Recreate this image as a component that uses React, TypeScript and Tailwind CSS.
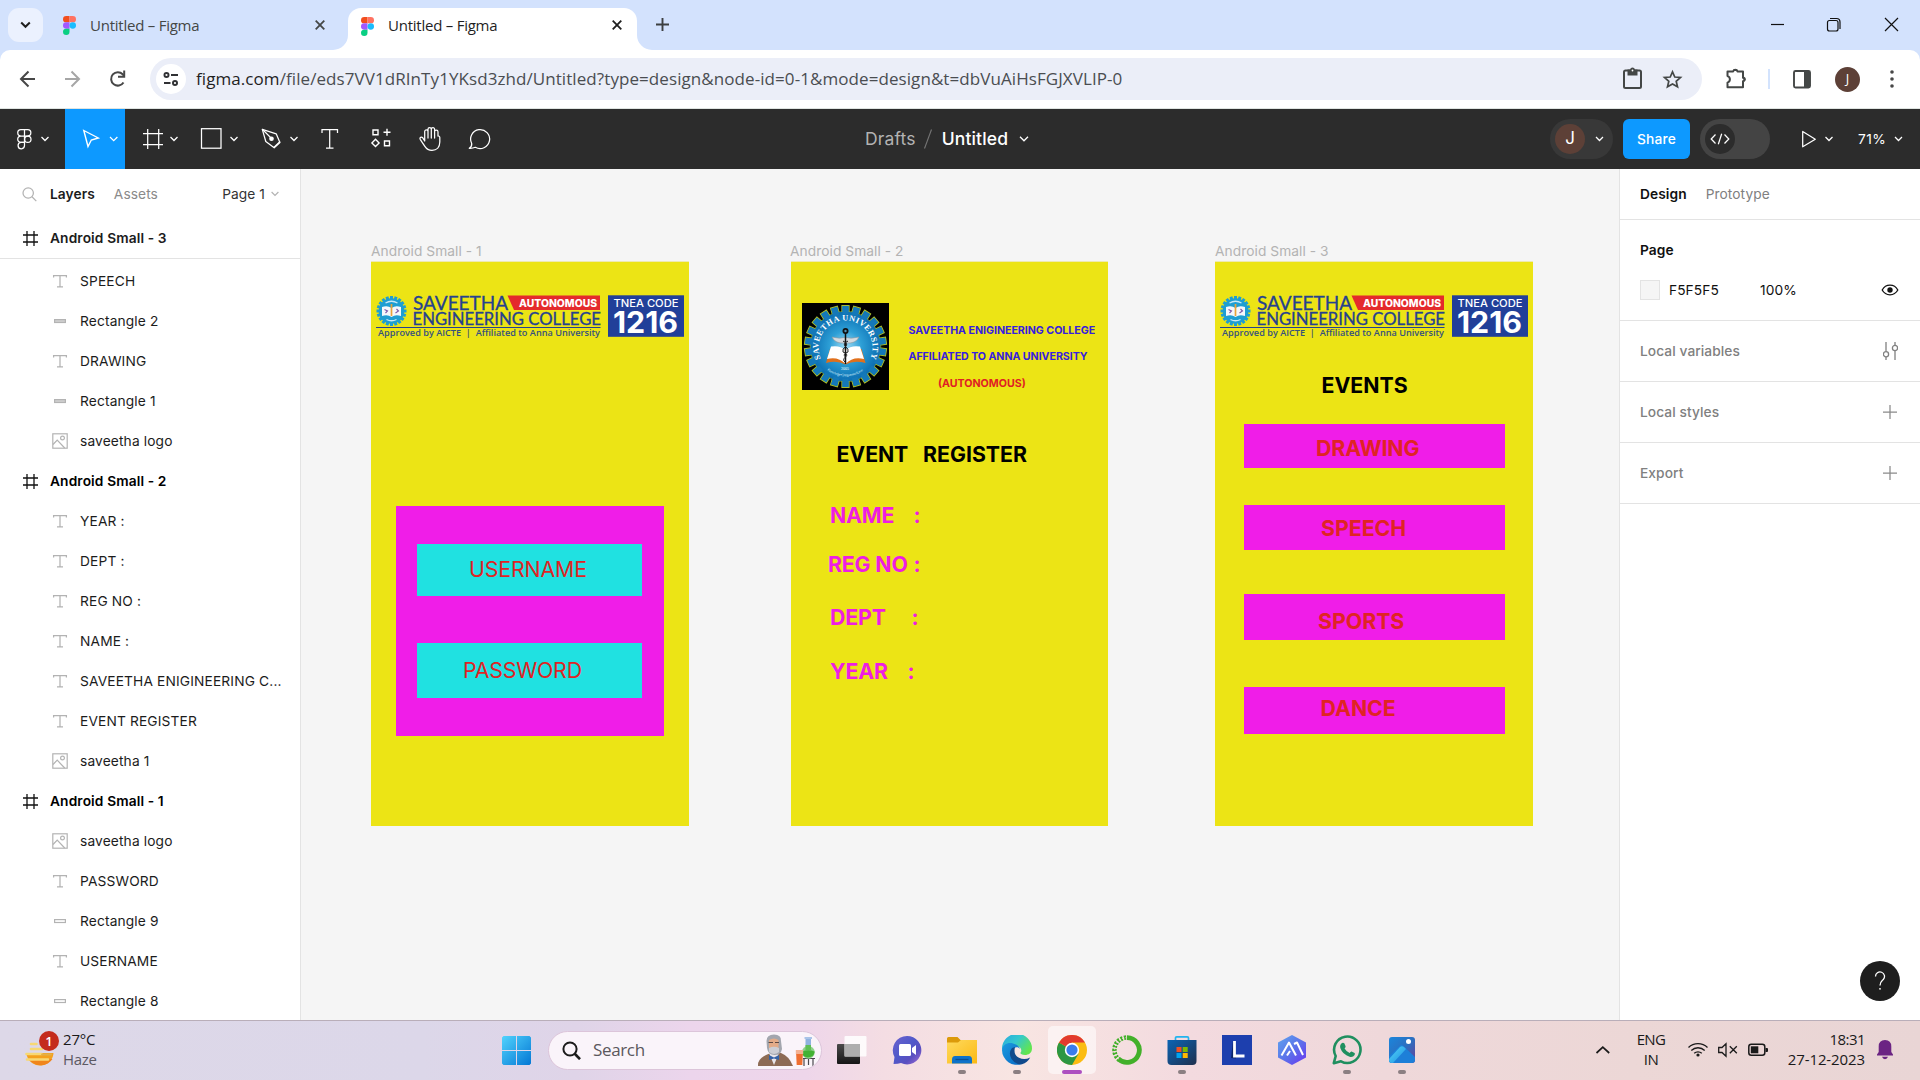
import type { ReactNode } from "react";

type LayerKind = "text" | "solid" | "rect" | "image" | "frame";

const layers: { kind: LayerKind; name: string }[] = [
  { kind: "text", name: "SPEECH" },
  { kind: "solid", name: "Rectangle 2" },
  { kind: "text", name: "DRAWING" },
  { kind: "solid", name: "Rectangle 1" },
  { kind: "image", name: "saveetha logo" },
  { kind: "frame", name: "Android Small - 2" },
  { kind: "text", name: "YEAR :" },
  { kind: "text", name: "DEPT :" },
  { kind: "text", name: "REG NO :" },
  { kind: "text", name: "NAME :" },
  { kind: "text", name: "SAVEETHA ENIGINEERING C..." },
  { kind: "text", name: "EVENT REGISTER" },
  { kind: "image", name: "saveetha 1" },
  { kind: "frame", name: "Android Small - 1" },
  { kind: "image", name: "saveetha logo" },
  { kind: "text", name: "PASSWORD" },
  { kind: "rect", name: "Rectangle 9" },
  { kind: "text", name: "USERNAME" },
  { kind: "rect", name: "Rectangle 8" },
];

/* ---------- Browser chrome ---------- */

function FigmaMark() {
  return (
    <svg className="h-[19px] w-[13px] shrink-0" viewBox="0 0 26 39" preserveAspectRatio="none">
      <path d="M6.500 0H13v13H6.500a6.500 6.500 0 0 1 0-13Z" fill="#f24e1e" />
      <path d="M13 0h6.500a6.500 6.500 0 0 1 0 13H13Z" fill="#ff7262" />
      <path d="M6.500 13H13v13H6.500a6.500 6.500 0 0 1 0-13Z" fill="#a259ff" />
      <circle cx="19.500" cy="19.500" r="6.500" fill="#1abcfe" />
      <path d="M6.500 26H13v6.500A6.500 6.500 0 1 1 6.500 26Z" fill="#0acf83" />
    </svg>
  );
}

function Cross({ color }: { color: string }) {
  return (
    <svg className="h-[10px] w-[10px] shrink-0" viewBox="0 0 10 10">
      <path d="M.7.7 9.300 9.300M9.300.7.7 9.300" stroke={color} strokeWidth="1.800" />
    </svg>
  );
}

function TabStrip() {
  return (
    <div className="flex h-[50px] items-end bg-[#d3e2fd]">
      <div className="mb-2 ml-2 flex h-[34px] w-[35px] items-center justify-center rounded-[11px] bg-[#ebf1fe]">
        <svg className="h-[8px] w-[11px]" viewBox="0 0 11 8">
          <path d="m1.200 1.500 4.300 4.300 4.300-4.300" fill="none" stroke="#1f1f1f" strokeWidth="2" />
        </svg>
      </div>
      <div className="mb-[5px] ml-5 flex h-10 w-[271px] items-center">
        <FigmaMark />
        <span className="ml-[14px] text-[15px] tracking-[-0.24px] text-[#444746]">Untitled – Figma</span>
        <span className="mr-[9px] ml-auto flex">
          <Cross color="#444746" />
        </span>
      </div>
      <svg className="-ml-[1px] h-[15px] w-[15px]" viewBox="0 0 15 15">
        <path d="M15 0v15H0A15 15 0 0 0 15 0Z" fill="#fff" />
      </svg>
      <div className="flex h-[42px] w-[289px] items-center rounded-t-[13px] bg-white pb-[8px]">
        <span className="ml-[13px] flex h-[26px] items-center">
          <span className="mt-[3px] flex">
            <FigmaMark />
          </span>
          <span className="mt-px ml-[14px] text-[15px] tracking-[-0.24px] text-[#1f1f1f]">Untitled – Figma</span>
        </span>
        <span className="mr-[15px] ml-auto flex">
          <Cross color="#1f1f1f" />
        </span>
      </div>
      <svg className="h-[15px] w-[15px]" viewBox="0 0 15 15">
        <path d="M0 0v15h15A15 15 0 0 1 0 0Z" fill="#fff" />
      </svg>
      <svg className="mb-[19px] ml-[4px] h-[13px] w-[13px]" viewBox="0 0 13 13">
        <path d="M6.500 0v13M0 6.500h13" stroke="#3c3f41" strokeWidth="1.900" />
      </svg>
      <svg className="ml-auto h-[50px] w-[200px]" viewBox="1720 0 200 50">
        <g fill="none" stroke="#111" strokeWidth="1.200">
          <path d="M1771 24.500h13" />
          <rect x="1827.500" y="20.500" width="10.500" height="10.500" rx="2" />
          <path d="M1830 18.500h6.500a3.500 3.500 0 0 1 3.500 3.500v7" />
          <path d="m1885 18 13 13M1898 18l-13 13" />
        </g>
      </svg>
    </div>
  );
}

function AddressBar() {
  return (
    <div className="bg-[#d3e2fd]">
      <div className="flex h-[58px] items-center rounded-t-[10px] bg-white">
        <svg className="h-[58px] w-[150px] shrink-0" viewBox="0 50 150 58">
          <g fill="none" strokeWidth="2">
            <path d="M35 79H21.500M28.500 71.500 21 79l7.500 7.500" stroke="#474747" />
            <path d="M65 79h13.500M71.500 71.500 79 79l-7.500 7.500" stroke="#a6a6a6" />
            <path d="M123.500 82.500a6.700 6.700 0 1 1-.8-8.200l1.300 1.500" stroke="#474747" />
            <path d="M124.200 70.500v6.200h-6.200" stroke="#474747" />
          </g>
        </svg>
        <div className="flex h-[42px] w-[1552px] items-center rounded-full bg-[#ebeef8] pl-[6px]">
          <div className="flex h-[30px] w-[30px] items-center justify-center rounded-full bg-white">
            <svg className="h-[14px] w-[16px]" viewBox="0 0 16 14" fill="none" stroke="#303134" strokeWidth="1.900">
              <circle cx="3.500" cy="3" r="2.050" />
              <path d="M8 3h7M1 11h6.500" />
              <circle cx="12" cy="11" r="2.050" />
            </svg>
          </div>
          <span className="ml-[10px] text-[17px] tracking-[0.075px] whitespace-pre text-[#4a4d51]">
            <span className="text-[#1f1f1f]">figma.com</span>
            /file/eds7VV1dRInTy1YKsd3zhd/Untitled?type=design&amp;node-id=0-1&amp;mode=design&amp;t=dbVuAiHsFGJXVLIP-0
          </span>
          <svg className="mr-[17px] ml-auto h-[24px] w-[66px]" viewBox="1619 67 66 24">
            <g fill="none" stroke="#444746" strokeWidth="2">
              <rect x="1624" y="70.500" width="17" height="17.500" rx="1.500" />
              <path
                d="m1672.500 71.800 2.300 5.200 5.700.5-4.300 3.800 1.300 5.500-5-2.900-5 2.900 1.300-5.500-4.300-3.800 5.700-.5Z"
                strokeWidth="1.700"
              />
            </g>
            <path d="M1627.500 69.500h2.500a2.600 2.600 0 0 1 5 0h2.500v6h-10Z" fill="#444746" />
            <circle cx="1632.500" cy="70.500" r=".9" fill="#fff" />
          </svg>
        </div>
        <svg className="h-[58px] w-[126px]" viewBox="1702 50 126 58">
          <path
            d="M1728.500 71.500h4.600a2.300 2.300 0 0 1 4.400 0h5.500v6.200a1.800 1.800 0 0 1 0 3.500v6h-15.500v-4.600a3.400 3.400 0 0 0 0-6.500v-4.600Z"
            fill="none"
            stroke="#444746"
            strokeWidth="2"
            strokeLinejoin="round"
          />
          <path d="M1733 71a2.600 2.600 0 0 1 5 0ZM1744 76.800a2.600 2.600 0 0 1 0 5Z" fill="#444746" />
          <rect x="1768" y="69" width="2" height="20" fill="#d3e3fd" />
          <rect x="1794" y="71" width="16" height="16.500" rx="1.500" fill="none" stroke="#444746" strokeWidth="1.900" />
          <path d="M1804 71h6v16.500h-6Z" fill="#444746" />
        </svg>
        <div className="ml-[7px] flex h-[25px] w-[25px] items-center justify-center rounded-full bg-[#5d4037] text-[13px] text-white">
          J
        </div>
        <svg className="ml-[30px] h-[20px] w-[4px]" viewBox="0 0 4 20" fill="#474747">
          <circle cx="2" cy="3" r="1.800" />
          <circle cx="2" cy="10" r="1.800" />
          <circle cx="2" cy="17" r="1.800" />
        </svg>
      </div>
      <div className="h-px bg-[#dfe4e1]" />
    </div>
  );
}

/* ---------- Figma toolbar ---------- */

function Cell({ width, box, blue, children }: { width: string; box: string; blue?: boolean; children: ReactNode }) {
  return (
    <svg
      className={`h-[60px] shrink-0 ${width} ${blue ? "bg-[#0d99ff]" : ""}`}
      viewBox={box}
      fill="none"
      stroke="#fff"
      strokeWidth="1.250"
    >
      {children}
    </svg>
  );
}

function Toolbar() {
  return (
    <div className="flex h-[60px] items-center bg-[#2c2c2c] font-['Inter',sans-serif] text-white">
      <Cell width="w-[65px]" box="0 109 65 60">
        <path d="M24.500 129.700h-3.600a3.100 3.100 0 0 0 0 6.300h3.600Zm0 0h3.200a3.100 3.100 0 0 1 0 6.300h-3.200M24.500 136h-3.600a3.200 3.200 0 0 0 0 6.400h3.600Z" />
        <circle cx="27.800" cy="139.200" r="3.200" />
        <path d="M24.500 142.400h-3.600a3.200 3.200 0 1 0 3.600 3.200Z" />
        <path d="m41.500 137 3.500 3.500 3.500-3.500" />
      </Cell>
      <Cell width="w-[60px]" box="65 109 60 60" blue>
        <path d="m83.800 130.500 14.500 7.500-7 2-3.300 6.500Z" strokeWidth="1.400" />
        <path d="m110 137 3.700 3.700 3.700-3.700" />
      </Cell>
      <Cell width="w-[60px]" box="125 109 60 60">
        <path d="M147.700 129v20M158.700 129v20M143 133.500h20M143 144.500h20" />
        <path d="m170.500 137 3.500 3.500 3.500-3.500" />
      </Cell>
      <Cell width="w-[60px]" box="185 109 60 60">
        <rect x="201.500" y="128.700" width="19.500" height="19.500" />
        <path d="m230.500 137 3.500 3.500 3.500-3.500" />
      </Cell>
      <Cell width="w-[60px]" box="245 109 60 60">
        <path d="m262.300 129.300 3.500 12.200 8.400 6.300 5.700-5.300-3.700-8.700Z" strokeLinejoin="round" />
        <path d="m262.300 129.300 8.500 8.500M273.800 147.500l6.300-6" />
        <circle cx="271.500" cy="138.700" r="1.700" fill="#fff" />
        <path d="m290.500 137 3.500 3.500 3.500-3.500" />
      </Cell>
      <Cell width="w-[50px]" box="305 109 50 60">
        <path d="M322 133v-3.500h15.500v3.500M329.700 129.500v18.500M326 148h7.500" />
      </Cell>
      <Cell width="w-[50px]" box="355 109 50 60">
        <path
          d="M373 130h5v4.800h-5ZM384.500 141h5v4.800h-5ZM387 128.800v7M383.500 132.300h7M375.500 139.200l3.600 3.700-3.600 3.600-3.600-3.600Z"
          strokeWidth="1.400"
        />
      </Cell>
      <Cell width="w-[50px]" box="405 109 50 60">
        <path
          d="M424.700 141v-9.500a1.650 1.650 0 0 1 3.300 0v6.500-8.700a1.650 1.650 0 0 1 3.300 0v8.700-8.700a1.650 1.650 0 0 1 3.300 0v8.700-6.300a1.650 1.650 0 0 1 3.400 0V136a1.600 1.600 0 0 1 1.800 1.600v4.500c0 5-3 8.300-7.800 8.300-3.700 0-5.700-1.800-7.300-4.300l-4.500-6.800c-1-1.700 1.200-3 2.500-1.600Z"
          strokeLinejoin="round"
        />
      </Cell>
      <Cell width="w-[50px]" box="455 109 50 60">
        <path
          d="M469.300 148.300c1.800-1.300 2.700-2.800 2.400-4.800a9.500 9.500 0 1 1 3.600 3.800c-1.800.8-3.900 1.100-6 1Z"
          strokeLinejoin="round"
        />
      </Cell>
      <div className="ml-[360px] flex items-center text-[17.5px] tracking-[0.15px]">
        <span className="text-[#b3b3b3]">Drafts</span>
        <svg className="ml-[8px] h-[20px] w-[8px]" viewBox="0 0 8 20">
          <path d="M.5 19.500 7.500.5" stroke="#757575" strokeWidth="1.100" />
        </svg>
        <span className="ml-[10px] font-medium">Untitled</span>
        <svg className="ml-[11px] h-[6px] w-[10px]" viewBox="0 0 10 6">
          <path d="m1 .8 4 4 4-4" fill="none" stroke="#fff" strokeWidth="1.300" />
        </svg>
      </div>
      <div className="ml-auto flex items-center text-[13.75px]">
        <div className="flex h-10 w-[63px] items-center rounded-full bg-[#383838] pl-[5px]">
          <span className="flex h-[30px] w-[30px] items-center justify-center rounded-full bg-[#5d4037] text-[17px]">
            J
          </span>
          <svg className="ml-[10px] h-[6px] w-[9px]" viewBox="0 0 9 6">
            <path d="m1 1 3.500 3.500L8 1" fill="none" stroke="#fff" strokeWidth="1.250" />
          </svg>
        </div>
        <div className="ml-[10px] flex h-10 w-[67px] items-center justify-center rounded-[6px] bg-[#0d99ff] font-medium tracking-[0.15px]">
          Share
        </div>
        <div className="ml-[10px] flex h-10 w-[70px] items-center rounded-full bg-[#444] pl-[5px]">
          <span className="flex h-[30px] w-[30px] items-center justify-center rounded-full bg-[#2c2c2c]">
            <svg className="h-[12px] w-[20px]" viewBox="0 0 20 12" fill="none" stroke="#fff" strokeWidth="1.250">
              <path d="M5.500 1.500 1.200 6l4.300 4.500M14.500 1.500 18.800 6l-4.300 4.500M11.700.8 8.300 11.200" />
            </svg>
          </span>
        </div>
        <svg
          className="ml-[31px] h-[18px] w-[34px]"
          viewBox="1801 130 34 18"
          fill="none"
          stroke="#fff"
          strokeWidth="1.250"
        >
          <path d="M1802.700 131.500v15.300l12.600-7.600Z" strokeLinejoin="round" />
          <path d="m1825.500 137 3.500 3.500 3.500-3.500" />
        </svg>
        <span className="ml-[23px] w-[30px] tracking-[0.4px]">71%</span>
        <svg className="mr-[17px] ml-[6px] h-[6px] w-[9px]" viewBox="0 0 9 6">
          <path d="m1 1 3.500 3.500L8 1" fill="none" stroke="#fff" strokeWidth="1.250" />
        </svg>
      </div>
    </div>
  );
}

/* ---------- Left panel ---------- */

function FrameIcon() {
  return (
    <svg className="h-[15px] w-[15px] shrink-0" viewBox="0 0 15 15" stroke="#111" strokeWidth="1.300">
      <path d="M4 0v15M11 0v15M0 4h15M0 11h15" />
    </svg>
  );
}

function LayerIcon({ kind }: { kind: LayerKind }) {
  if (kind === "text")
    return (
      <svg className="h-[16px] w-[16px]" viewBox="0 0 16 16" fill="none" stroke="#b3b3b3" strokeWidth="1.250">
        <path d="M1.600 4.500V2.600h12.800v1.900M8 2.600v11M5 13.800h6" />
      </svg>
    );
  if (kind === "image")
    return (
      <svg className="h-[16px] w-[16px]" viewBox="0 0 16 16" fill="none" stroke="#b3b3b3" strokeWidth="1.200">
        <rect x=".8" y=".8" width="14.400" height="14.400" />
        <circle cx="10.500" cy="5" r="1.900" />
        <path d="m1 11.500 4.200-4.300 7.500 7.800" />
      </svg>
    );
  return (
    <svg className="h-[16px] w-[16px]" viewBox="0 0 16 16">
      <rect
        x="2.600"
        y="6.600"
        width="10.800"
        height="2.900"
        fill={kind === "solid" ? "#cfcfcf" : "#fff"}
        stroke="#b3b3b3"
        strokeWidth="1.200"
      />
    </svg>
  );
}

function LayersPanel() {
  return (
    <div className="flex w-[301px] shrink-0 flex-col overflow-hidden border-r border-[#e3e3e3] bg-white text-[13.75px] tracking-[0.07px] text-[#1c1c1c]">
      <div className="flex h-[50px] shrink-0 items-center">
        <svg
          className="ml-[22px] h-[15px] w-[15px]"
          viewBox="0 0 15 15"
          fill="none"
          stroke="#b3b3b3"
          strokeWidth="1.250"
        >
          <circle cx="6.200" cy="6" r="5.200" />
          <path d="m10 9.800 4.300 4.300" />
        </svg>
        <span className="ml-[13px] font-semibold">Layers</span>
        <span className="ml-[19px] text-[#8a8a8a]">Assets</span>
        <span className="ml-auto text-[#333]">Page 1</span>
        <svg className="mr-[21px] ml-[6px] h-[6px] w-[8px]" viewBox="0 0 8 6">
          <path d="m.6 1 3.400 3.400L7.400 1" fill="none" stroke="#b3b3b3" strokeWidth="1.200" />
        </svg>
      </div>
      <div className="flex h-[40px] shrink-0 items-center border-b border-[#e3e3e3] pl-[23px]">
        <FrameIcon />
        <span className="ml-[12px] font-semibold tracking-[0.12px]">Android Small - 3</span>
      </div>
      <div className="flex flex-col pt-[2px]">
        {layers.map((l, i) =>
          l.kind === "frame" ? (
            <div key={i} className="flex h-10 shrink-0 items-center pl-[23px]">
              <FrameIcon />
              <span className="ml-[12px] font-semibold tracking-[0.12px] text-black">{l.name}</span>
            </div>
          ) : (
            <div key={i} className="flex h-10 shrink-0 items-center pl-[52px]">
              <LayerIcon kind={l.kind} />
              <span className="ml-[12px] tracking-[0.14px] whitespace-nowrap">{l.name}</span>
            </div>
          ),
        )}
      </div>
    </div>
  );
}

/* ---------- Canvas ---------- */

const smallTeeth = Array.from({ length: 20 }, (_, i) => i * 18);
const bigTeeth = Array.from({ length: 22 }, (_, i) => (i * 360) / 22);

function CollegeBanner() {
  return (
    <svg className="absolute top-[32px] left-[4px] h-[46px] w-[311px]" viewBox="375 294 311 46">
      <g transform="translate(391.500 311)">
        {smallTeeth.map((a) => (
          <rect key={a} x="-1.500" y="-15" width="3" height="4" fill="#1e9ed2" transform={`rotate(${a})`} />
        ))}
        <circle r="12.800" fill="#1e9ed2" />
        <path d="M-6-8Q0-11.500 6-8M-5 8.500Q0 11 5 8.500" fill="none" stroke="#c9e9f6" strokeWidth="1.300" />
        <path d="M-9.500-4Q-4-6 0-3 4-6 9.500-4V5Q4 3 0 6-4 3-9.500 5Z" fill="#f4f7fb" />
        <path d="M0-7v12" stroke="#e8a33a" strokeWidth="1.700" />
        <path d="M-7-1.500l3 1.500-2 2M5-2l2 2-3 2" stroke="#7a55a8" strokeWidth="1.100" fill="none" />
      </g>
      <g fill="#25418f" stroke="#25418f" strokeWidth=".3" fontFamily="Lato, sans-serif">
        <text x="413" y="309.800" fontSize="19.500" textLength="95" lengthAdjust="spacingAndGlyphs">
          SAVEETHA
        </text>
        <text x="412.500" y="324.800" fontSize="17.500" textLength="188.500" lengthAdjust="spacingAndGlyphs">
          ENGINEERING COLLEGE
        </text>
      </g>
      <path d="M507.500 295.500H600V310h-86Z" fill="#e42a2c" />
      <text
        x="519"
        y="306.500"
        fontFamily="Inter, sans-serif"
        fontSize="10.200"
        fontWeight="800"
        fill="#fff"
        textLength="78"
        lengthAdjust="spacingAndGlyphs"
      >
        AUTONOMOUS
      </text>
      <path d="M376 327.500h224.500" stroke="#25418f" strokeWidth="1" />
      <text
        x="378"
        y="336"
        fontFamily="'Open Sans', sans-serif"
        fontSize="8.800"
        fontWeight="600"
        fill="#35517e"
        textLength="222"
        lengthAdjust="spacingAndGlyphs"
        xmlSpace="preserve"
      >
        Approved by AICTE  |  Affiliated to Anna University
      </text>
      <rect x="608" y="295.300" width="76" height="41.500" fill="#213f99" />
      <text
        x="613.500"
        y="307"
        fontFamily="Inter, sans-serif"
        fontSize="10.500"
        fontWeight="500"
        fill="#fff"
        textLength="65"
        lengthAdjust="spacingAndGlyphs"
      >
        TNEA CODE
      </text>
      <text
        x="613"
        y="332.500"
        fontFamily="Inter, sans-serif"
        fontSize="30"
        fontWeight="700"
        fill="#fff"
        textLength="65"
        lengthAdjust="spacingAndGlyphs"
      >
        1216
      </text>
    </svg>
  );
}

function UniversityEmblem() {
  return (
    <svg className="absolute top-[41px] left-[11px] h-[87px] w-[87px]" viewBox="0 0 87 87">
      <defs>
        <radialGradient id="emblem">
          <stop offset="0" stopColor="#9fdcf5" />
          <stop offset=".45" stopColor="#2d9fd6" />
          <stop offset="1" stopColor="#0a6cb0" />
        </radialGradient>
        <path id="emblem-top" d="M19.300 56.500A27 27 0 1 1 67.700 56.500" />
        <path id="emblem-bottom" d="M24.500 66.500A30 30 0 0 0 62.500 66.500" />
      </defs>
      <rect width="87" height="87" fill="#000" />
      <g transform="translate(43.500 43.500)">
        {bigTeeth.map((a) => (
          <rect
            key={a}
            x="-3.600"
            y="-41"
            width="7.200"
            height="9"
            fill="#1478b8"
            stroke="#a9bd2b"
            strokeWidth="1"
            transform={`rotate(${a})`}
          />
        ))}
        <circle r="35.300" fill="url(#emblem)" stroke="#a9bd2b" strokeWidth=".5" />
        {bigTeeth.map((a) => (
          <rect key={a} x="-3.100" y="-40.300" width="6.200" height="8" fill="#1478b8" transform={`rotate(${a})`} />
        ))}
      </g>
      <text fontFamily="'Liberation Serif', serif" fontSize="8.300" fontWeight="700" fill="#fff">
        <textPath href="#emblem-top" textLength="107" startOffset="1">
          SAVEETHA UNIVERSITY
        </textPath>
      </text>
      <text fontFamily="'Liberation Serif', serif" fontSize="3.600" fill="#d8eef9">
        <textPath href="#emblem-bottom" textLength="38" startOffset="1">
          Knowledge•Competence•Love
        </textPath>
      </text>
      <text x="39" y="66.500" fontFamily="'Liberation Serif', serif" fontSize="4" fill="#fff">
        2005
      </text>
      <path d="M28 46 24 60q11-3 19.500 1.500Q52 57 63.500 60l-4-14Z" fill="#e0701c" />
      <path d="M29 43.500 25 56q11-3 18.500 5Q51 53 62 56l-4-12.500Q49 42 43.500 47 38 42 29 43.500Z" fill="#fff" />
      <path
        d="M30 34q7 2 13 .5Q50 36 57 34q-3 7-13.500 6Q33 41 30 34Z"
        fill="#d5dbe0"
        stroke="#8a959d"
        strokeWidth=".6"
      />
      <path d="M43.500 27v34" stroke="#111" strokeWidth="1.500" />
      <circle cx="43.500" cy="28" r="3" fill="#111" />
      <circle cx="43.500" cy="28" r="1.200" fill="#4f94b8" />
      <path d="M41 38q6 3 2.500 5.500T41 49q6 2 2.500 5T43 59" fill="none" stroke="#222" strokeWidth="1" />
      <path d="M46 38q-6 3-2.500 5.500T46 49q-6 2-2.500 5" fill="none" stroke="#222" strokeWidth="1" />
    </svg>
  );
}

function Label({ pos, children }: { pos: string; children: ReactNode }) {
  return <div className={`absolute leading-[26px] whitespace-pre ${pos}`}>{children}</div>;
}

function Canvas() {
  return (
    <div className="relative flex-1 overflow-hidden bg-[#f5f5f5]">
      <div className="absolute top-[73px] left-[70px] text-[13.75px] leading-[18px] tracking-[0.06px] text-[#b3b3b3]">
        Android Small - 1
      </div>
      <div className="absolute top-[73px] left-[489px] text-[13.75px] leading-[18px] tracking-[0.06px] text-[#b3b3b3]">
        Android Small - 2
      </div>
      <div className="absolute top-[73px] left-[914px] text-[13.75px] leading-[18px] tracking-[0.06px] text-[#b3b3b3]">
        Android Small - 3
      </div>

      <div className="absolute top-[92px] left-[70px] h-[565px] w-[318px] border-t border-[#eeeab0] bg-[#ece415]">
        <CollegeBanner />
        <div className="absolute top-[244px] left-[25px] h-[230px] w-[268px] bg-[#f01de8]" />
        <div className="absolute top-[282px] left-[46px] h-[52px] w-[225px] bg-[#20e1e1]" />
        <div className="absolute top-[381px] left-[46px] h-[55px] w-[225px] bg-[#20e1e1]" />
        <Label pos="top-[293.5px] left-[98px] text-[21.3px] tracking-[-0.12px] text-[#df2424]">USERNAME</Label>
        <Label pos="top-[394.5px] left-[92px] text-[21.3px] tracking-[-0.2px] text-[#df2424]">PASSWORD</Label>
      </div>

      <div className="absolute top-[92px] left-[490px] h-[565px] w-[317px] border-t border-[#eeeab0] bg-[#ece415]">
        <UniversityEmblem />
        <Label pos="top-[56px] left-[117.5px] text-[10.65px] font-bold tracking-[-0.03px] text-[#3620df]">
          SAVEETHA ENIGINEERING COLLEGE
        </Label>
        <Label pos="top-[82px] left-[117.5px] text-[10.65px] font-bold tracking-[-0.05px] text-[#3620df]">
          AFFILIATED TO ANNA UNIVERSITY
        </Label>
        <Label pos="top-[109px] left-[147px] text-[10.65px] font-bold text-[#df2024]">(AUTONOMOUS)</Label>
        <Label pos="top-[178.5px] left-[45.5px] text-[21.3px] font-bold tracking-[-0.1px] text-black">EVENT</Label>
        <Label pos="top-[178.5px] left-[132px] text-[21.3px] font-bold text-black">REGISTER</Label>
        <div className="text-[21.3px] font-bold tracking-[-0.15px] text-[#ee1ee2]">
          <Label pos="top-[240px] left-[39px]">NAME</Label>
          <Label pos="top-[240px] left-[122.5px]">:</Label>
          <Label pos="top-[288.5px] left-[37px]">REG NO</Label>
          <Label pos="top-[288.5px] left-[122.5px]">:</Label>
          <Label pos="top-[342px] left-[39px]">DEPT</Label>
          <Label pos="top-[342px] left-[120.5px]">:</Label>
          <Label pos="top-[396px] left-[39px]">YEAR</Label>
          <Label pos="top-[396px] left-[116.5px]">:</Label>
        </div>
      </div>

      <div className="absolute top-[92px] left-[914px] h-[565px] w-[318px] border-t border-[#eeeab0] bg-[#ece415]">
        <CollegeBanner />
        <Label pos="top-[110px] left-[106.5px] text-[21.3px] font-bold text-black">EVENTS</Label>
        <div className="absolute top-[162px] left-[29px] h-[44px] w-[261px] bg-[#f01de8]" />
        <div className="absolute top-[243px] left-[29px] h-[45px] w-[261px] bg-[#f01de8]" />
        <div className="absolute top-[332px] left-[29px] h-[46px] w-[261px] bg-[#f01de8]" />
        <div className="absolute top-[425px] left-[29px] h-[47px] w-[261px] bg-[#f01de8]" />
        <div className="text-[21.3px] font-bold text-[#df2424]">
          <Label pos="top-[172.5px] left-[101px] tracking-[-0.1px]">DRAWING</Label>
          <Label pos="top-[253px] left-[106px]">SPEECH</Label>
          <Label pos="top-[345.5px] left-[103px]">SPORTS</Label>
          <Label pos="top-[433px] left-[105.5px]">DANCE</Label>
        </div>
      </div>
    </div>
  );
}

/* ---------- Right panel ---------- */

function PlusIcon() {
  return (
    <svg className="h-[14px] w-[14px]" viewBox="0 0 14 14">
      <path d="M7 0v14M0 7h14" stroke="#8a8a8a" strokeWidth="1.250" />
    </svg>
  );
}

function SideRow({ label, children }: { label: string; children: ReactNode }) {
  return (
    <div className="flex h-[61px] items-center justify-between border-b border-[#e3e3e3] pr-[23px] pl-5 font-medium text-[#808080]">
      {label}
      {children}
    </div>
  );
}

function DesignPanel() {
  return (
    <div className="relative w-[301px] shrink-0 border-l border-[#e3e3e3] bg-white text-[13.75px] tracking-[0.07px] text-[#111]">
      <div className="flex h-[51px] items-center gap-[19px] border-b border-[#e3e3e3] pl-5">
        <span className="font-semibold">Design</span>
        <span className="text-[#808080]">Prototype</span>
      </div>
      <div className="h-[101px] border-b border-[#e3e3e3] pt-[10px] pr-[21px] pl-5">
        <div className="flex h-10 items-center font-semibold">Page</div>
        <div className="flex h-10 items-center">
          <div className="h-5 w-5 border border-[#e3e3e3] bg-[#f5f5f5]" />
          <span className="ml-[9px] w-[91px]">F5F5F5</span>
          <span>100%</span>
          <svg className="ml-auto h-[12px] w-[18px]" viewBox="0 0 18 12">
            <path
              d="M1.200 6C3 2.700 5.700 1.200 9 1.200S15 2.700 16.800 6C15 9.300 12.300 10.800 9 10.800S3 9.300 1.200 6Z"
              fill="none"
              stroke="#111"
              strokeWidth="1.300"
            />
            <circle cx="9" cy="6" r="2.700" fill="#111" />
          </svg>
        </div>
      </div>
      <SideRow label="Local variables">
        <svg className="-mr-[1px] h-[18px] w-[15px]" viewBox="0 0 15 18" fill="none" stroke="#808080" strokeWidth="1.300">
          <path d="M3 0v9.500M3 15v3M12 0v3.300M12 8.800V18" />
          <circle cx="3" cy="12.200" r="2.600" />
          <circle cx="12" cy="6" r="2.600" />
        </svg>
      </SideRow>
      <SideRow label="Local styles">
        <PlusIcon />
      </SideRow>
      <SideRow label="Export">
        <PlusIcon />
      </SideRow>
      <div className="absolute right-[20px] bottom-[19px] flex h-10 w-10 items-center justify-center rounded-full bg-[#1e1e1e]">
        <svg className="h-[20px] w-[12px]" viewBox="0 0 12 20">
          <path
            d="M1.500 5.500a4.500 4.500 0 1 1 7.800 3C7.500 10.300 6 11 6 14.500"
            fill="none"
            stroke="#fff"
            strokeWidth="1.300"
          />
          <circle cx="6" cy="17.800" r=".9" fill="#fff" />
        </svg>
      </div>
    </div>
  );
}

/* ---------- Taskbar ---------- */

function TaskIcon({ running, active, children }: { running?: boolean; active?: boolean; children: ReactNode }) {
  return (
    <div className="flex w-[55px] shrink-0 justify-center">
      <div className={`flex h-12 w-12 flex-col items-center pt-[9px] ${active ? "rounded-[5px] bg-white/55" : ""}`}>
        <svg className="h-[30px] w-[30px]" viewBox="0 0 30 30">
          {children}
        </svg>
        {running && <span className="mt-[5px] h-[4px] w-[8px] rounded-full bg-[#8b7f82]" />}
        {active && <span className="mt-[5px] h-[4px] w-[20px] rounded-full bg-[#ad4fc0]" />}
      </div>
    </div>
  );
}

function Taskbar() {
  return (
    <div className="flex h-[60px] shrink-0 items-center border-t border-[#b9aeb9] bg-[linear-gradient(90deg,#ddd8e8_0%,#dcd7e9_22%,#dfd4e8_30%,#ecd5ec_36%,#eed6ea_42%,#f4dde3_46%,#f8e5e2_53%,#f3dadf_62%,#efd8da_72%,#ecd7d6_85%,#e9d5d5_100%)] pb-px text-[15px] text-[#1a1a1a]">
      <svg className="mb-[3px] ml-[24px] h-[38px] w-[36px]" viewBox="24 1027 36 38">
        <path d="M26 1050h27.500a13.500 13 0 0 1-26.500 3Z" fill="#f4a11d" />
        <path d="M28.500 1056h24a13.500 12 0 0 1-23 1Z" fill="#f0851c" />
        <path d="M31 1041h5.500M31 1046h11M26.500 1051h15M27 1056.500h21" stroke="#f7d873" strokeWidth="2.600" strokeLinecap="round" />
        <path d="M42 1051.500h9" stroke="#e2b049" strokeWidth="2" strokeLinecap="round" />
        <circle cx="49" cy="1038" r="10" fill="#c42b1c" />
        <text
          x="49"
          y="1043"
          textAnchor="middle"
          fontFamily="'Open Sans', sans-serif"
          fontSize="13"
          fontWeight="600"
          fill="#fff"
        >
          1
        </text>
      </svg>
      <div className="mb-[3px] ml-[3px] w-[60px] leading-[20px]">
        <div className="tracking-[-0.2px]">27°C</div>
        <div className="tracking-[-0.3px] text-[#5c5963]">Haze</div>
      </div>
      <svg className="ml-[379px] h-[29px] w-[29px] shrink-0" viewBox="0 0 29 29">
        <defs>
          <linearGradient id="win" x1="0" y1="0" x2="1" y2="1">
            <stop offset="0" stopColor="#51d3fd" />
            <stop offset="1" stopColor="#0477d4" />
          </linearGradient>
        </defs>
        <path
          d="M1.500 0H14v14H0V1.500ZM15 0h12.500L29 1.500V14H15ZM0 15h14v14H1.500L0 27.500ZM15 15h14v12.500L27.500 29H15Z"
          fill="url(#win)"
        />
      </svg>
      <div className="ml-[17px] flex h-[39px] w-[274px] shrink-0 items-center overflow-hidden rounded-full border border-[#dcc5da] bg-[#faf4fa]">
        <svg className="ml-[13px] h-[19px] w-[19px]" viewBox="0 0 19 19" fill="none" stroke="#1c1c1c" strokeWidth="2">
          <circle cx="8" cy="8" r="6.600" />
          <path d="m12.500 12.500 5.500 5.700" strokeWidth="2.600" />
        </svg>
        <span className="ml-[12px] text-[17px] tracking-[-0.35px] text-[#5b585d]">Search</span>
        <svg className="mr-[5px] ml-auto h-[34px] w-[60px]" viewBox="757 1034 60 34">
          <path d="M759 1067q-.5-7 8-11l7-3 8 1q8 3 12 13Z" fill="#8d6b55" />
          <path d="M770 1054l5 12 5-12Z" fill="#e9e6ea" />
          <path d="M767.500 1042q0-6.500 7.500-6.500t7 6.500l1 8q-1 6-7.500 6t-7.500-7Z" fill="#a3a6ae" />
          <path d="M770 1041q5-3 9.500 0v9q-4.500 4-9.500 0Z" fill="#e3ab88" />
          <path d="M770 1049q5-2.500 10 0v4q-5 4-10 0Z" fill="#cdced4" />
          <path d="M769.500 1043.500h4.500M776 1043.500h4" stroke="#5d4a45" strokeWidth="1.100" />
          <path d="m770 1056 5 2.500 5-2.500v5l-5-1.500-5 1.500Z" fill="#3563a8" />
          <path d="M804 1059.500h12M805 1060v7M814 1060v7M809.500 1060v6" stroke="#4a474e" strokeWidth="1.200" fill="none" />
          <path d="M806.500 1039h5.500v9h-5.500Z" fill="#8fb2e0" />
          <path d="M805.500 1038h7.500v2h-7.500Z" fill="#a9c4e8" />
          <circle cx="809.300" cy="1053.300" r="6.400" fill="#8fd08a" />
          <path d="M803 1052.500q6.300-2.500 12.600 0a6.400 6.400 0 0 1-12.600 1Z" fill="#43b234" />
          <path d="M806.500 1046h5.500v5h-5.500Z" fill="#5fbf55" />
          <path d="M797 1052h7l-.7 14h-5.600Z" fill="#ef6f32" />
          <path d="M796.800 1051h7.400v4h-7.400Z" fill="#f3b193" />
        </svg>
      </div>
      <div className="ml-[2px] flex">
        <TaskIcon>
          <defs>
            <linearGradient id="tv" x1="0" y1="0" x2="0" y2="1">
              <stop offset="0" stopColor="#4a4a4a" />
              <stop offset="1" stopColor="#161616" />
            </linearGradient>
          </defs>
          <rect x="0" y="9" width="23" height="20" rx="1" fill="url(#tv)" />
          <rect x="7.500" y="1" width="22" height="20.500" rx="1" fill="#fff" fillOpacity=".85" />
          <rect x="7.500" y="9" width="15.500" height="12.500" fill="#aeaeae" />
        </TaskIcon>
        <TaskIcon>
          <defs>
            <linearGradient id="chat" x1="0" y1="0" x2="1" y2="1">
              <stop offset="0" stopColor="#6c62cf" />
              <stop offset=".45" stopColor="#5059c9" />
              <stop offset=".7" stopColor="#5a4fc0" />
              <stop offset="1" stopColor="#a26fd6" />
            </linearGradient>
          </defs>
          <path d="M15 1a14.200 14.200 0 1 1-6 27q-3 1-7.500 1L2.500 22A14.200 14.200 0 0 1 15 1Z" fill="url(#chat)" />
          <rect x="7" y="9" width="12" height="12" rx="1.500" fill="#fff" />
          <path d="m20 13 4-3v10l-4-3Z" fill="#fff" />
        </TaskIcon>
        <TaskIcon running>
          <defs>
            <linearGradient id="exp" x1="0" y1="0" x2="1" y2="1">
              <stop offset="0" stopColor="#ffda5e" />
              <stop offset="1" stopColor="#fbb913" />
            </linearGradient>
          </defs>
          <path d="M0 3.500Q0 2 1.500 2h9l3 3H28q2 0 2 2v5H0Z" fill="#dc9a0a" />
          <path d="M0 7.500h11l3-2.500h16v23.500H0Z" fill="url(#exp)" />
          <path d="M5 28.500v-4Q5 21 8 21h14q3 0 3 3.500v4Z" fill="#0f72c9" />
          <path d="M8.500 24.500h13" stroke="#0b4f94" strokeWidth="1.300" />
        </TaskIcon>
        <TaskIcon running>
          <defs>
            <linearGradient id="e1" x1="0" y1="0" x2="1" y2=".6">
              <stop offset="0" stopColor="#2aa8e0" />
              <stop offset=".5" stopColor="#34c8cf" />
              <stop offset="1" stopColor="#62e54f" />
            </linearGradient>
            <linearGradient id="e2" x1="0" y1="0" x2="1" y2="1">
              <stop offset="0" stopColor="#1c9bdf" />
              <stop offset="1" stopColor="#0968c4" />
            </linearGradient>
          </defs>
          <path
            d="M0 14A15 15 0 0 1 30 13.500C30 18 26.500 20 23 20c-4 0-5.500-1.500-4-3 1-2-.5-6-4.500-6Z"
            fill="url(#e1)"
          />
          <path
            d="M0 15C.5 9.500 6 7 11 8.500c4 1 6.500 3 7 5.500-2-3-7-2-7.500 2.500C10 23 16 28 20 29A15 15 0 0 1 0 15Z"
            fill="url(#e2)"
          />
          <path d="M10 13q-4 5-.5 11 4 6 10.500 5.200 5.500-1.700 8.200-6.700-6 3-11.200.2Q11 20 13 12Z" fill="#114a8c" />
        </TaskIcon>
        <TaskIcon active>
          <circle cx="15" cy="15" r="15" fill="#fbbc12" />
          <path d="M15 15 2 7.500A15 15 0 0 0 15 30l6.500-11.300Z" fill="#2c9744" />
          <path d="M15 15 2 7.500A15 15 0 0 1 28 7.500H15Z" fill="#e23a2e" />
          <circle cx="15" cy="15" r="7.200" fill="#fff" />
          <circle cx="15" cy="15" r="5.600" fill="#3a7cec" />
        </TaskIcon>
        <TaskIcon>
          <path d="M15 2.600a12.400 12.400 0 1 1-8.500 21.500" fill="none" stroke="#43b02a" strokeWidth="4.800" />
          <path
            d="M7.500 25A12.400 12.400 0 0 1 15 2.600"
            fill="none"
            stroke="#43b02a"
            strokeWidth="4.500"
            strokeDasharray="2.200 1.300"
          />
          <path
            d="M6.500 24A12.400 12.400 0 0 1 14 2.600"
            fill="none"
            stroke="#f5dde0"
            strokeWidth="1.100"
            strokeDasharray="2 1.500"
          />
        </TaskIcon>
        <TaskIcon running>
          <defs>
            <linearGradient id="store" x1="0" y1="0" x2="1" y2="1">
              <stop offset="0" stopColor="#0b64b4" />
              <stop offset="1" stopColor="#20304e" />
            </linearGradient>
          </defs>
          <path
            d="M8.500 6V3q0-1.200 1.200-1.200h10.600q1.200 0 1.200 1.200v3"
            fill="none"
            stroke="#22b4ee"
            strokeWidth="1.700"
          />
          <path d="M.5 5h29v21q0 4-4 4h-21q-4 0-4-4Z" fill="url(#store)" />
          <rect x="9.500" y="12" width="5" height="5" fill="#f25022" />
          <rect x="15.700" y="12" width="5" height="5" fill="#7fba00" />
          <rect x="9.500" y="18" width="5" height="5" fill="#00a4ef" />
          <rect x="15.700" y="18" width="5" height="5" fill="#ffb900" />
        </TaskIcon>
        <TaskIcon>
          <rect width="30" height="30" fill="#1d3fae" />
          <path d="m11 6-2 17 5 .5V8Z" fill="#0c2668" />
          <path d="M12.500 6v15h10" fill="none" stroke="#fff" strokeWidth="2.800" />
        </TaskIcon>
        <TaskIcon>
          <defs>
            <linearGradient id="hex" x1="0" y1="0" x2="1" y2="1">
              <stop offset="0" stopColor="#5fa5ee" />
              <stop offset=".5" stopColor="#5b74ea" />
              <stop offset="1" stopColor="#6a35f0" />
            </linearGradient>
          </defs>
          <path d="M15 0 29 7.500v15L15 30 1 22.500v-15Z" fill="url(#hex)" />
          <path
            d="m4.500 20.500 7.500-13 7 13M10 20.500l3-4.500M17 9l3-1.500 6 12.500"
            fill="none"
            stroke="#fff"
            strokeWidth="2"
            strokeLinejoin="round"
          />
        </TaskIcon>
        <TaskIcon running>
          <path
            d="M1.800 28.200 3.700 21A13.200 13.200 0 1 1 9 26.300Z"
            fill="none"
            stroke="#1f8f5f"
            strokeWidth="2.600"
            strokeLinejoin="round"
          />
          <path
            d="M10 8q1.300-.8 2.300.3l1.300 3q.3 1-1 2.300 1.500 3 5 4.300 1.200-1.700 2-1.500l3 1.500q.6.600 0 2-1.600 2.600-5 1.800Q10.500 19.500 8.300 13 7.500 10 10 8Z"
            fill="#1f8f5f"
          />
        </TaskIcon>
        <TaskIcon running>
          <defs>
            <linearGradient id="ph" x1="0" y1="0" x2="1" y2="1">
              <stop offset="0" stopColor="#1b86dc" />
              <stop offset=".5" stopColor="#2c6fc0" />
              <stop offset="1" stopColor="#6a3f98" />
            </linearGradient>
            <linearGradient id="ph2" x1="0" y1="0" x2="1" y2="1">
              <stop offset="0" stopColor="#55d6f7" />
              <stop offset="1" stopColor="#1c8fe3" />
            </linearGradient>
          </defs>
          <rect x="2" y="2" width="26" height="26" rx="3" fill="url(#ph)" />
          <path d="m2 21 10.500-10q2-2 4 0L28 22v3q0 3-3 3H5q-3 0-3-3Z" fill="#1d7fd8" />
          <path d="m2 24 11-12q2-1.500 4 0l2 2L6 28H5q-3 0-3-3Z" fill="url(#ph2)" />
          <circle cx="21.500" cy="6.500" r="2.500" fill="#fff" />
        </TaskIcon>
      </div>
      <svg className="ml-[166px] h-[8px] w-[16px] shrink-0" viewBox="0 0 16 8">
        <path d="m1.500 7 6.300-5.800L14.200 7" fill="none" stroke="#1a1a1a" strokeWidth="1.700" />
      </svg>
      <div className="mb-[2px] ml-[20px] w-[40px] text-center leading-[20px] tracking-[-0.6px]">
        <div>ENG</div>
        <div>IN</div>
      </div>
      <svg
        className="ml-[15px] h-[20px] w-[84px] shrink-0"
        viewBox="1686 1040 84 20"
        fill="none"
        stroke="#1a1a1a"
        strokeWidth="1.300"
      >
        <path d="M1688.500 1047.500a13.500 13.500 0 0 1 19 0M1691.300 1050.500a9.500 9.500 0 0 1 13.400 0M1694.200 1053.300a5.500 5.500 0 0 1 7.600 0" />
        <circle cx="1698" cy="1055" r="1.600" fill="#1a1a1a" stroke="none" />
        <path d="M1718.700 1047.500h3.300l4-3.800v12.600l-4-3.800h-3.300ZM1729.800 1046.300l7 7M1736.800 1046.300l-7 7" />
        <rect x="1748.800" y="1044.300" width="16" height="11" rx="2.500" strokeWidth="1.500" />
        <rect x="1750.800" y="1046.300" width="7.500" height="7" fill="#1a1a1a" stroke="none" />
        <path d="M1765.500 1048h1.500q1 0 1 1v2q0 1-1 1h-1.500Z" fill="#1a1a1a" stroke="none" />
      </svg>
      <div className="mb-[2px] ml-auto pr-[12px] text-right leading-[20px]">
        <div className="tracking-[-0.55px]">18:31</div>
        <div className="tracking-[-0.1px]">27-12-2023</div>
      </div>
      <svg className="mr-[27px] h-[20px] w-[16px] shrink-0" viewBox="0 0 16 20">
        <path
          d="M8 0q6.300 0 6.300 6.500V12l1.700 2.500v1H0v-1L1.700 12V6.500Q1.700 0 8 0ZM5 16.800h6q-.8 2.400-3 2.400t-3-2.400Z"
          fill="#6b2483"
        />
      </svg>
    </div>
  );
}

export default function App() {
  return (
    <div className="flex h-[1080px] w-[1920px] flex-col overflow-hidden bg-white font-['Open_Sans','Noto_Sans',sans-serif]">
      <TabStrip />
      <AddressBar />
      <Toolbar />
      <div className="flex min-h-0 flex-1 font-['Inter',sans-serif]">
        <LayersPanel />
        <Canvas />
        <DesignPanel />
      </div>
      <Taskbar />
    </div>
  );
}
